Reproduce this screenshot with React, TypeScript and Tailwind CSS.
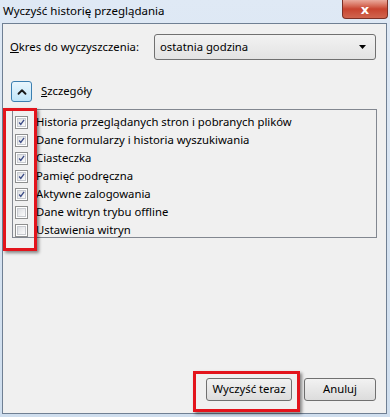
import { ChevronUp } from "lucide-react";

const items = [
  { label: "Historia przeglądanych stron i pobranych plików", on: true },
  { label: "Dane formularzy i historia wyszukiwania", on: true },
  { label: "Ciasteczka", on: true },
  { label: "Pamięć podręczna", on: true },
  { label: "Aktywne zalogowania", on: true },
  { label: "Dane witryn trybu offline", on: false },
  { label: "Ustawienia witryn", on: false },
];

function Check({ on }: { on: boolean }) {
  return (
    <div className="w-[13px] h-[13px] border border-[#8e8f8f] bg-white flex items-center justify-center shrink-0">
      <div className="w-[9px] h-[9px] border border-[#c8cbd0] bg-gradient-to-br from-[#dcdee2] to-[#fbfbfb] flex items-center justify-center">
        {on && (
          <svg width="9" height="9" viewBox="0 0 9 9">
            <path d="M1.5 4.5 L3.6 7 L7.8 1.2" fill="none" stroke="#3c4c86" strokeWidth="1.7" />
          </svg>
        )}
      </div>
    </div>
  );
}

export default function App() {
  return (
    <div className="relative w-[390px] h-[417px] overflow-hidden bg-gradient-to-b from-[#dfe9f5] to-[#cfdeee] text-[11.3px] text-black font-['Noto_Sans',sans-serif]">
      {/* title bar */}
      <div className="h-[23px] flex items-start justify-between">
        <span className="pl-[3px] pt-[1px] leading-[20px] text-[11.5px]">Wyczyść historię przeglądania</span>
        <div className="mr-[2px] w-[46px] h-[19px] rounded-b-[4px] border border-t-0 border-[#7b3026] bg-gradient-to-b from-[#e9a99c] via-[#c8432f] to-[#d0654f] flex items-center justify-center">
          <span className="text-white font-bold text-[13px] leading-none font-['DejaVu_Sans',sans-serif]">x</span>
        </div>
      </div>

      {/* client */}
      <div className="ml-[2px] w-[385px] h-[391px] border border-[#6f7f93] bg-[#f0f0f0] flex flex-col">
        <div className="mt-[10px] flex items-center">
          <span className="pl-[7px] w-[151px]"><span className="underline">O</span>kres do wyczyszczenia:</span>
          <div className="w-[222px] h-[26px] rounded-[3px] border border-[#707070] bg-gradient-to-b from-[#f2f2f2] to-[#e3e3e3] flex items-center justify-between pl-[5px] pr-[9px]">
            <span>ostatnia godzina</span>
            <svg width="7" height="4" viewBox="0 0 7 4"><path d="M0 0 H7 L3.5 4 Z" fill="#000" /></svg>
          </div>
        </div>

        <div className="mt-[21px] flex items-center pl-[8px] gap-[9px]">
          <div className="w-[21px] h-[21px] rounded-[3px] border border-[#3c7fb1] bg-gradient-to-b from-[#eaf6fd] to-[#bfe5f9] flex items-center justify-center">
            <ChevronUp size={14} strokeWidth={3.2} color="#1a1a1a" />
          </div>
          <span><span className="underline">S</span>zczegóły</span>
        </div>

        <div className="mt-[7px] ml-[9px] w-[365px] h-[129px] border border-[#828790] bg-[#f0f0f0] pt-[3px]">
          {items.map((it, i) => (
            <div key={i} className="h-[18px] flex items-center pl-[2px] gap-[8px]">
              <Check on={it.on} />
              <span className="leading-none">{it.label}</span>
            </div>
          ))}
        </div>

        <div className="mt-auto mb-[12px] flex justify-end gap-[12px] pr-[10px]">
          <div className="w-[86px] h-[23px] rounded-[3px] border border-[#707070] bg-gradient-to-b from-[#f2f2f2] to-[#dcdcdc] flex items-center justify-center">
            Wyczyść teraz
          </div>
          <div className="w-[72px] h-[23px] rounded-[3px] border border-[#707070] bg-gradient-to-b from-[#f2f2f2] to-[#dcdcdc] flex items-center justify-center">
            Anuluj
          </div>
        </div>
      </div>

      {/* red annotation boxes */}
      <div className="absolute left-[3px] top-[108px] w-[34px] h-[143px] border-[3px] border-[#e3141c] shadow-[2px_2px_3px_rgba(0,0,0,0.45)]" />
      <div className="absolute left-[193px] top-[371px] w-[107px] h-[41px] border-[3px] border-[#e3141c] shadow-[2px_2px_3px_rgba(0,0,0,0.45)]" />
    </div>
  );
}
